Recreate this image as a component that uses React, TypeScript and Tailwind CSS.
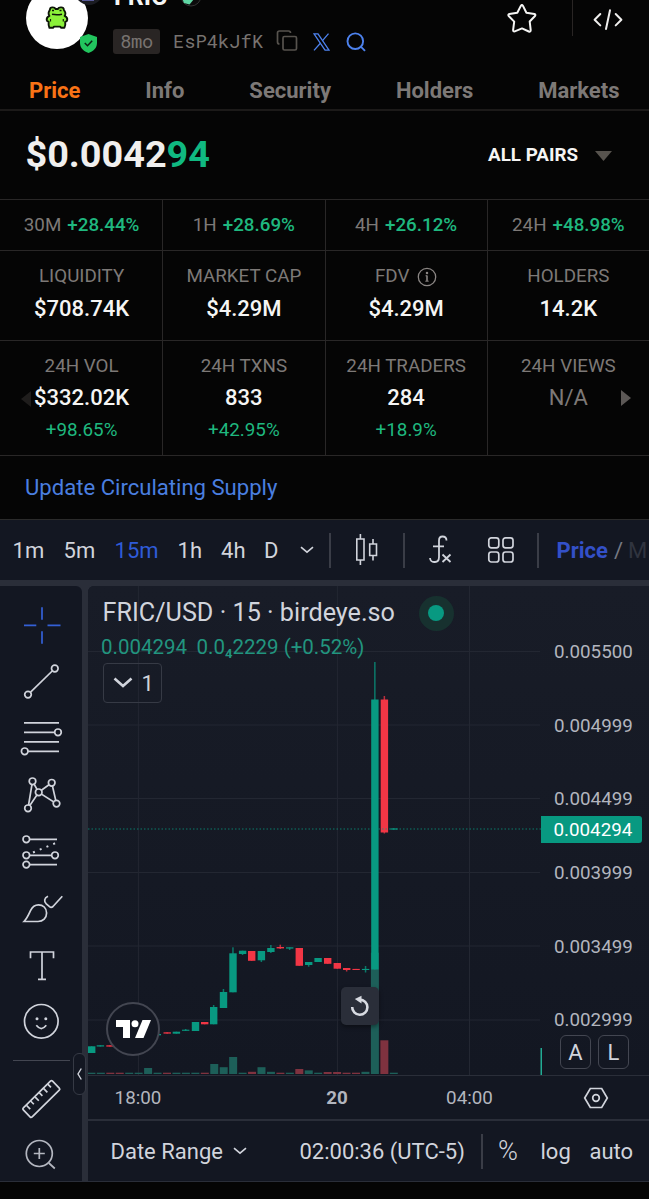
import React from "react";

type Kids = { children?: React.ReactNode };

/* ---------- header ---------- */

function Frog() {
  return (
    <svg width="24" height="24" viewBox="0 0 24 24" className="block">
      <path
        d="M5 3.2C5 1 9.5.6 10.6 3h2.2C14 .6 18.600 1 18.800 3.400c.2 1.600 1.600 2 1.600 4.200 0 1.200-.4 1.800-.8 2.200 1.800.8 3 2.200 2.600 4.200-.2 1.200-1.200 1.600-2 1.800.4 2.600 0 4.600-.8 6H16l-.8-1.200H9L8 21.800H4.400c-.8-1.600-1-3.600-.8-6-1-.2-1.800-.8-1.900-1.800-.2-2 .9-3.400 2.700-4.200C3.800 9 3.500 8.200 3.600 7c.1-1.700 1.200-2.200 1.400-3.800z"
        fill="#8bf03a"
        stroke="#0d1508"
        strokeWidth="1.900"
        strokeLinejoin="round"
      />
      <path d="M7 4.500h2M14.500 4.500h2" stroke="#0d1508" strokeWidth="1.700" />
      <path d="M7 8.300q5 1 10-.1" stroke="#0d1508" strokeWidth="1.600" fill="none" />
      <path d="M5.500 13v2.500M18.300 13v2.500" stroke="#12210a" strokeWidth="1.200" />
    </svg>
  );
}

function Header() {
  return (
    <div className="relative flex h-[72px] overflow-hidden">
      <div className="-mt-[13px] ml-[26px] flex h-[61.500px] w-[61.500px] shrink-0 items-center justify-center rounded-full bg-white">
        <Frog />
      </div>
      <svg className="absolute left-[80px] top-[34px]" width="17" height="19" viewBox="0 0 17 19">
        <path d="M8.500 0 17 3v6c0 5-3.800 8.300-8.500 10C3.800 17.300 0 14 0 9V3z" fill="#22c55e" />
        <path d="m4.800 9 2.700 2.700 4.700-4.900" stroke="#0c1f14" strokeWidth="1.500" fill="none" />
      </svg>
      <svg className="absolute left-[78px] top-0" width="22" height="6" viewBox="0 0 22 6">
        <path d="M0 0h22q-5 5-11 5T0 0" fill="#1b1c22" />
        <path d="M4 0h12v1H4z" fill="#5a5c9c" />
      </svg>
      <div className="ml-[25.500px] flex flex-col">
        <div className="-mt-[18px] flex h-[30px] items-center">
          <span className="w-[67px] pl-[1px] text-[25px] font-bold leading-[30px] text-[#f5f5f4]">FRIC</span>
          <svg width="22" height="22" viewBox="0 0 22 22" className="-mt-[3px]">
            <circle cx="11" cy="11" r="10" fill="#0b0b0b" stroke="#333" />
            <path d="M1.500 12 4 6h13l-3 8-4.500 5.500L4 18z" fill="#5fd6a4" />
          </svg>
        </div>
        <div className="mt-[16px] flex h-[26px] items-center font-['Roboto_Mono','DejaVu_Sans_Mono',monospace] text-[18.800px] text-[#787370]">
          <span className="flex h-[25px] w-[47px] items-center justify-center rounded-[3px] bg-[#292524] tracking-[-0.200px]">
            8mo
          </span>
          <span className="ml-[13px] w-[92px]">EsP4kJfK</span>
          <svg width="22" height="22" viewBox="0 0 22 22" className="-mt-[2px] ml-[11px]" fill="none" stroke="#57534e" strokeWidth="1.700">
            <rect x="7" y="7.500" width="13.500" height="13.500" rx="1.500" />
            <path d="M3.500 15Q1.500 15 1.500 13V4Q1.500 2 3.500 2H12.500Q14.500 2 14.500 4" />
          </svg>
          <svg width="17" height="18" viewBox="0 0 17 18" className="ml-[15px] mt-[1px]" fill="none" stroke="#4d82ee">
            <path d="M1 .8h4L16 17.200h-4z" strokeWidth="1.300" />
            <path d="M15.500.6 9.300 7.800M7.600 10 1 17.400" strokeWidth="1.300" />
          </svg>
          <svg width="20" height="20" viewBox="0 0 20 20" className="ml-[16px] mt-[1px]" fill="none" stroke="#4d82ee" strokeWidth="1.900">
            <circle cx="9.300" cy="9.200" r="7.800" />
            <path d="m14.800 14.700 4.200 4.200" />
          </svg>
        </div>
      </div>
      <svg width="30" height="30" viewBox="0 0 30 30" className="ml-[141px] mt-[4px]" fill="none" stroke="#f5f5f4" strokeWidth="2" strokeLinejoin="round">
        <path d="M13.800 1.900q1.100-1.900 2.200 0l3.400 6.800 8 1.300q1.600.6.600 2l-5.300 5.500 1 8.600q-.1 2-1.900 1.400L15 24.400l-7.200 3q-1.700.4-1.700-1.300l1.100-8.500-5.500-5.600q-1-1.500.7-2l7.900-1.200z" />
      </svg>
      <div className="ml-[35px] h-[36px] w-px bg-[#292524]" />
      <svg width="30" height="22" viewBox="0 0 30 22" className="ml-[20px] mt-[9px]" fill="none" stroke="#f0efee" strokeWidth="2" strokeLinecap="round" strokeLinejoin="round">
        <path d="M7.300 5 1.600 10.700l5.700 5.700M22.700 5l5.700 5.700-5.700 5.700M17 1.200l-4 18.800" />
      </svg>
    </div>
  );
}

function Tabs() {
  return (
    <nav className="flex h-[39px] items-center justify-between border-b-2 border-[#1c1a19] pl-[29px] pr-[29.500px] text-[22px] font-bold text-[#7d7977]">
      <span className="text-[#f97316]">Price</span>
      <span>Info</span>
      <span>Security</span>
      <span>Holders</span>
      <span>Markets</span>
    </nav>
  );
}

/* ---------- price stats ---------- */

const changes = [
  ["30M", "+28.44%"],
  ["1H", "+28.69%"],
  ["4H", "+26.12%"],
  ["24H", "+48.98%"],
];

const totals = [
  ["LIQUIDITY", "$708.74K"],
  ["MARKET CAP", "$4.29M"],
  ["FDV", "$4.29M"],
  ["HOLDERS", "14.2K"],
];

const daily = [
  ["24H VOL", "$332.02K", "+98.65%"],
  ["24H TXNS", "833", "+42.95%"],
  ["24H TRADERS", "284", "+18.9%"],
  ["24H VIEWS", "N/A", ""],
];

function InfoIcon() {
  return (
    <svg width="20" height="20" viewBox="0 0 20 20" fill="none" stroke="#8a8583" strokeWidth="1.300">
      <circle cx="10" cy="10" r="8.700" />
      <path d="M10 8.500v5.500" strokeWidth="1.600" />
      <path d="M8.500 8.800h1.500M8.300 14.200h3.400" strokeWidth="1" />
      <circle cx="10" cy="6" r=".6" fill="#8a8583" />
    </svg>
  );
}

function Stats() {
  return (
    <div className="text-center text-[18.800px] text-[#7d7977]">
      <div className="grid h-[52px] grid-cols-4 border-y border-[#292727]">
        {changes.map(([k, v]) => (
          <div key={k} className="flex items-center justify-center gap-[6px] border-l border-[#292727] first:border-transparent">
            <span>{k}</span>
            <span className="font-medium text-[#1fb87f]">{v}</span>
          </div>
        ))}
      </div>
      <div className="grid h-[90px] grid-cols-4 border-b border-[#292727]">
        {totals.map(([k, v]) => (
          <div key={k} className="border-l border-[#292727] pt-[9.500px] first:border-transparent">
            <div className="flex h-8 items-center justify-center gap-[8px]">
              {k}
              {k === "FDV" && <InfoIcon />}
            </div>
            <div className="text-[22px] font-medium leading-8 text-[#f5f5f4]">{v}</div>
          </div>
        ))}
      </div>
      <div className="relative">
        <div className="grid h-[115px] grid-cols-4 border-b border-[#292727]">
          {daily.map(([k, v, p]) => (
            <div key={k} className="border-l border-[#292727] pt-[9px] first:border-transparent">
              <div className="leading-8">{k}</div>
              <div className={v === "N/A" ? "text-[22px] leading-8" : "text-[22px] font-medium leading-8 text-[#f5f5f4]"}>{v}</div>
              <div className="leading-8 text-[#1fb87f]">{p}</div>
            </div>
          ))}
        </div>
        <svg className="absolute left-[21px] top-[50px]" width="10" height="16" viewBox="0 0 10 16">
          <path d="M10 0v16L0 8z" fill="#1f1d1c" />
        </svg>
        <svg className="absolute left-[621px] top-[49px]" width="10" height="16" viewBox="0 0 10 16">
          <path d="M0 0v16l10-8z" fill="#5c5856" />
        </svg>
      </div>
    </div>
  );
}

/* ---------- chart toolbar ---------- */

function Sep() {
  return <div className="h-[35px] w-[2px] shrink-0 bg-[#3a3d47]" />;
}

function Chevron({ className }: { className: string }) {
  return (
    <svg width="14" height="8" viewBox="0 0 14 8" className={className} fill="none" stroke="#d1d4dc" strokeWidth="1.600">
      <path d="m1 1.200 6 5 6-5" />
    </svg>
  );
}

function TopBar() {
  return (
    <div className="flex h-[61px] items-center overflow-hidden whitespace-nowrap border-t border-[#2b2b2b] bg-[#131722] text-[22px] text-[#d1d4dc]">
      <span className="ml-[12.600px] w-[51px]">1m</span>
      <span className="w-[51px]">5m</span>
      <span className="w-[63px] text-[#2f5bd8]">15m</span>
      <span className="w-[43.500px]">1h</span>
      <span className="w-[43px]">4h</span>
      <span className="w-[36px]">D</span>
      <Chevron className="mr-[14.900px] shrink-0" />
      <Sep />
      <svg width="24" height="34" viewBox="0 0 24 34" className="-mt-[1px] ml-[24px] shrink-0" fill="none" stroke="#d1d4dc" strokeWidth="1.600">
        <path d="M5.400 1v5M5.400 27v5M1.800 6h7.200v21H1.800zM18 6v5M18 22.500v5M14.700 11h6.800v11.500h-6.800z" />
      </svg>
      <div className="ml-[24px] flex">
        <Sep />
      </div>
      <svg width="24" height="30" viewBox="0 0 24 30" className="ml-[24px] shrink-0" fill="none" stroke="#d1d4dc" strokeWidth="1.800">
        <path d="M17.500 5.500q0-4-4-4-3.500 0-3.500 4V22q0 5-4 5H5q-3.500 0-4-4M4 11.300h11M13.500 19.500l8 7.500M21.500 19.500l-8 7.500" />
      </svg>
      <svg width="28" height="28" viewBox="0 0 28 28" className="ml-[34px] shrink-0" fill="none" stroke="#d1d4dc" strokeWidth="1.700">
        <rect x="1.800" y="1.800" width="10" height="10" rx="2.500" />
        <rect x="16" y="1.800" width="10" height="10" rx="2.500" />
        <rect x="1.800" y="16" width="10" height="10" rx="2.500" />
        <rect x="16" y="16" width="10" height="10" rx="2.500" />
      </svg>
      <div className="ml-[22px] flex">
        <Sep />
      </div>
      <span className="ml-[17.500px] font-bold text-[#3350c8]">Price</span>
      <span className="ml-[6px] text-[#767983]">/</span>
      <span className="ml-[5px] text-[#30343f]">M</span>
    </div>
  );
}

/* ---------- drawing tools ---------- */

function Tool({ children }: Kids) {
  return (
    <svg width="56" height="56.600" viewBox="-29 -28.300 56 56.600" className="shrink-0" fill="none" stroke="#d1d4dc" strokeWidth="1.700">
      {children}
    </svg>
  );
}

function Rings({ at }: { at: [number, number][] }) {
  return (
    <>
      {at.map(([x, y]) => (
        <circle key={`${x},${y}`} cx={x} cy={y} r="3.300" fill="#131722" />
      ))}
    </>
  );
}

function Tools() {
  return (
    <div className="relative flex w-[82px] flex-col items-center rounded-tr-[6px] bg-[#131722] pt-[11px]">
      <Tool>
        <path stroke="#3460d6" d="M-18 0h12.300M5.500 0h13M0-18v12.500M0 6v12.500" />
      </Tool>
      <Tool>
        <path d="M-14 12.300 12.800-13.800" />
        <Rings at={[[-14, 12.300], [12.800, -13.800]]} />
      </Tool>
      <Tool>
        <path d="M-18-15.500h35M-18-6h35M-18 3.500h35M-18 13h35" />
        <Rings at={[[16, -6], [-17.300, 13]]} />
      </Tool>
      <Tool>
        <path d="M-14 13-9.500-14-3.300-3 9.700-12.500l4.800 20.800L-3.300-3z" />
        <Rings at={[[-9.500, -14], [-14, 13], [-3.300, -3], [9.700, -12.500], [14.500, 8.300]]} />
      </Tool>
      <Tool>
        <path d="M-15.700-12H15M-15.700 4H13M-15.700 13.300H15" />
        <path d="m-9 1.200 23-9.600" strokeDasharray="2 5.300" strokeWidth="2" />
        <Rings at={[[-15.700, -12], [-15.700, 4], [13, 4], [-15.700, 13.300]]} />
      </Tool>
      <Tool>
        <path d="M-18 13.200H-4C1 13.200 4.600 9.600 4.600 4.800 4.600-.4 1-3.500-3.500-3.500c-4 0-6.200 2-8 5.800C-13.600 7-15 10-18 13.200z" />
        <path d="M6-12C2-10.200 1.800-7 4.300-4.400L7.500-1.600q1.700 1.400 3.500-.2L20.300-12" />
      </Tool>
      <Tool>
        <path d="M-11.500-7v-6.300h23V-7M0-13.300V14M-4 14h8" />
      </Tool>
      <Tool>
        <circle cx="-.7" cy="0" r="16.800" />
        <circle cx="-5" cy="-2.500" r="1.500" fill="#d1d4dc" stroke="none" />
        <circle cx="3.800" cy="-2.500" r="1.500" fill="#d1d4dc" stroke="none" />
        <path d="M-5.700 4Q-.7 10.500 4.300 4" />
      </Tool>
      <div className="mt-[10px] h-px w-[57px] shrink-0 bg-[#434651]" />
      <svg width="56" height="56" viewBox="-28.300 -28 56 56" className="mt-[10px] shrink-0" fill="none" stroke="#d1d4dc" strokeWidth="1.700">
        <g transform="rotate(-44.500)">
          <rect x="-20.500" y="-6.300" width="41" height="12.600" rx="1.500" />
          <path d="M-15-6V-.500M-9-6V-1.500M-3-6V-.500M3-6V-1.500M9-6V-.500M15-6V-1.500" />
        </g>
      </svg>
      <svg width="56" height="56" viewBox="-28.300 -28 56 56" className="shrink-0" fill="none" stroke="#b4b7c0" strokeWidth="1.700">
        <circle cx="-2" cy="-1.500" r="13" />
        <path d="M-7.500-1.500H3.500M-2-7V4M7.500 8l6 5.500" />
      </svg>
      <div className="absolute left-[73px] top-[467px] z-10 flex h-[42px] w-[13px] items-center justify-center rounded-[6px] border border-[#363a45] bg-[#131722]">
        <svg width="5" height="12" viewBox="0 0 5 12" fill="none" stroke="#d1d4dc" strokeWidth="1.400">
          <path d="M4.300.5 1 6l3.300 5.500" />
        </svg>
      </div>
    </div>
  );
}

/* ---------- candles ---------- */

const UP = "#089981";
const DOWN = "#f23645";

// x, direction, body top, body bottom, wick top, wick bottom
const candles: [number, number, number, number, number, number][] = [
  [88, 1, 1046.3, 1053, 1046.3, 1053],
  [96.7, 1, 1045.3, 1046.5, 1045.3, 1046.5],
  [106.3, 0, 1045.3, 1046.6, 1045.3, 1046.6],
  [153.6, 1, 1034, 1035.3, 1033, 1036],
  [163.5, 0, 1032.3, 1033.6, 1032.3, 1033.6],
  [172.7, 1, 1031.7, 1033.7, 1031.7, 1033.7],
  [182, 1, 1029.7, 1030.8, 1029, 1030.8],
  [191.8, 1, 1022, 1031, 1022, 1031],
  [201, 0, 1022, 1024.3, 1022, 1024.3],
  [210, 1, 1007, 1024.3, 1005, 1024.3],
  [219.8, 1, 992, 1008, 989, 1008],
  [229.3, 1, 953.3, 992.3, 947.3, 992.3],
  [238.9, 1, 950.7, 954, 950.7, 955],
  [248, 0, 951, 960.8, 951, 960.8],
  [257.7, 1, 951, 960.3, 951, 962],
  [267.2, 1, 948, 952, 945, 953],
  [276.6, 0, 947, 948.4, 944.7, 949],
  [286, 1, 947.3, 948.6, 947.3, 950],
  [295.6, 0, 948, 965.8, 948, 965.8],
  [305, 1, 962, 965, 962, 966.7],
  [314.4, 1, 958, 962, 958, 962],
  [324, 0, 958, 963.8, 958, 963.8],
  [333.6, 0, 963, 968.7, 963, 968.7],
  [343, 0, 968, 970, 968, 971.5],
  [352.4, 0, 968.9, 970, 968.9, 970],
  [361.9, 1, 968.9, 970, 966, 972.5],
  [371.2, 1, 699.5, 969.5, 662, 969.5],
  [380.7, 0, 699.5, 832.5, 696, 833.5],
  [390.3, 1, 828.4, 829.6, 828.4, 829.6],
];

// direction and height, left to right
const volumes: [number, number][] = [
  [1, 1.3], [1, 1.3], [0, 1.3], [0, 1.3], [1, 1.3], [1, 1.3], [1, 6], [1, 1.3], [0, 1.3], [1, 1.3],
  [1, 1.3], [1, 1.3], [0, 1.3], [1, 10], [1, 6.8], [1, 17], [1, 1.3], [0, 2.2], [1, 6.8], [1, 2.2],
  [0, 1.3], [1, 1.3], [0, 5], [1, 3.6], [1, 1.3], [0, 2], [0, 2], [0, 1.3], [0, 1.3], [1, 2.2],
  [1, 121.3], [0, 33.7], [1, 1.3],
];

function Plot() {
  return (
    <svg width="454" height="489" viewBox="88 586 454 489" className="block shrink-0">
      <g stroke="#232732" strokeWidth="1">
        {[651.5, 725, 798.5, 872.5, 946, 1020].map((y) => (
          <line key={y} x1="88" x2="540" y1={y} y2={y} />
        ))}
        {[138.4, 337.4, 469.5].map((x) => (
          <line key={x} x1={x} x2={x} y1="586" y2="1075" />
        ))}
      </g>
      {volumes.map(([up, h], i) => {
        const x = 87.4 + i * 9.45;
        return <rect key={i} x={x} y={1074 - h} width="8" height={h} fill={up ? "#1d5f59" : "#7f323f"} />;
      })}
      {candles.map(([x, up, top, bottom, hi, lo]) => {
        const fill = up ? UP : DOWN;
        return (
          <g key={x} fill={fill}>
            <rect x={x + 2.9} y={hi} width="1.500" height={lo - hi} opacity=".75" />
            <rect x={x} y={top} width="7.400" height={bottom - top} />
          </g>
        );
      })}
      <line x1="88" x2="542" y1="829" y2="829" stroke="#089981" strokeWidth="1.200" strokeDasharray="1.500 2" opacity=".75" />
      <rect x="540.500" y="1048" width="1.500" height="27" fill="#22ab94" />
    </svg>
  );
}

const prices = ["0.005500", "0.004999", "0.004499", "0.003999", "0.003499", "0.002999"];

function Legend() {
  return (
    <div className="absolute left-[13px] top-[9px] whitespace-nowrap">
      <div className="flex h-[36px] items-center text-[25.200px] text-[#d1d4dc]">
        <span className="w-[317.500px] pl-[1.500px]">FRIC/USD · 15 · birdeye.so</span>
        <span className="flex h-[35px] w-[35px] items-center justify-center rounded-full bg-[#17312f]">
          <span className="h-[15.500px] w-[15.500px] rounded-full bg-[#089981]" />
        </span>
      </div>
      <div className="flex h-[32px] items-center text-[20.500px] text-[#22957f]">
        <span>0.004294</span>
        <span className="ml-[9.500px]">0.0</span>
        <span className="mt-[13px] text-[13px] font-bold">4</span>
        <span>2229 (+0.52%)</span>
      </div>
      <div className="ml-[2px] flex h-[40px] w-[59px] items-center rounded-[4px] border-[1.500px] border-[#363a45] text-[22px] text-[#d1d4dc]">
        <svg width="20" height="12" viewBox="0 0 20 12" className="ml-[9px]" fill="none" stroke="#d1d4dc" strokeWidth="2.600">
          <path d="m1.500 1.500 8.500 7.500 8.500-7.500" />
        </svg>
        <span className="ml-[8.500px]">1</span>
      </div>
    </div>
  );
}

function Chart() {
  return (
    <div className="flex min-w-0 flex-1 flex-col overflow-hidden rounded-tl-[6px] bg-[#131722]">
      <div className="relative flex h-[490px] border-b border-[#2a2e39] bg-linear-to-b from-[#181c27] to-[#131722]">
        <Plot />
        <div className="flex flex-col pl-[12px] pt-[30px] text-[18.800px] text-[#b2b5be]">
          {prices.map((p) => (
            <span key={p} className="h-[73.700px] leading-[73.700px]">{p}</span>
          ))}
        </div>
        <Legend />
        <div className="absolute left-[453px] top-[230px] flex h-[27px] w-[101px] items-center rounded-r-[3px] bg-[#089981] pl-[12.500px] pt-[2px] text-[18.800px] text-white">
          0.004294
        </div>
        <div className="absolute left-[472px] top-[449px] flex gap-[7px] text-[22px] leading-none text-[#d1d4dc]">
          <span className="flex h-[34px] w-[31px] items-center justify-center rounded-[6px] border border-[#434651] pt-[1px]">A</span>
          <span className="flex h-[34px] w-[31px] items-center justify-center rounded-[6px] border border-[#434651] pt-[1px]">L</span>
        </div>
        <div className="absolute left-[18px] top-[416px] flex h-[54px] w-[54px] items-center justify-center rounded-full border-2 border-[#434651] bg-[#131722]">
          <svg width="35" height="18" viewBox="0 0 35 18" fill="#fff">
            <path d="M0 0h14v18H7V7H0z" />
            <circle cx="19" cy="3.800" r="3.500" />
            <path d="M26.500 0H35l-7.500 18H19z" />
          </svg>
        </div>
        <div className="absolute left-[253px] top-[401px] flex h-[38px] w-[38px] items-center justify-center rounded-[5px] bg-[#2a2e39] shadow-[0_2px_4px_rgba(0,0,0,0.4)]">
          <svg width="20" height="22" viewBox="0 0 20 22" fill="none" stroke="#d8dbe2" strokeWidth="2.600">
            <path d="M2.200 12A7.600 7.600 0 1 0 9.800 4.600H8.500" />
            <path d="M11.500.8v7.800L4.800 4z" fill="#d8dbe2" stroke="none" />
          </svg>
        </div>
      </div>
      <div className="flex h-[45px] items-center border-b-2 border-[#2a2e39] pt-[2px] text-[18.800px] text-[#b2b5be]">
        <span className="w-[100px] text-center">18:00</span>
        <span className="ml-[99px] w-[100px] text-center font-bold">20</span>
        <span className="ml-[32.500px] w-[100px] text-center">04:00</span>
        <svg width="26" height="22" viewBox="0 0 26 22" className="-mt-[2px] ml-[63px]" fill="none" stroke="#d1d4dc" strokeWidth="1.700">
          <path d="M1.700 11 7.300 1.500h11.400L24.300 11l-5.600 9.500H7.300z" />
          <circle cx="13" cy="11" r="3.300" />
        </svg>
      </div>
      <div className="flex h-[60px] items-center whitespace-nowrap text-[22px] text-[#d1d4dc]">
        <span className="ml-[22.500px] w-[122px]">Date Range</span>
        <Chevron className="shrink-0" />
        <span className="ml-[53px] w-[181.500px]">02:00:36 (UTC-5)</span>
        <Sep />
        <span className="ml-[15px] w-[42.500px] text-[27px] font-light">%</span>
        <span className="w-[49px]">log</span>
        <span>auto</span>
      </div>
    </div>
  );
}

export default function App() {
  return (
    <div className="h-[1199px] w-[649px] overflow-hidden bg-[#050505] font-['Roboto',sans-serif] antialiased">
      <Header />
      <Tabs />
      <div className="flex h-[88px] items-center justify-between pl-[25.500px] pr-[37px]">
        <div className="-mt-[2px] text-[37.800px] font-bold text-[#f0efee]">
          $0.0042<span className="text-[#10b981]">94</span>
        </div>
        <div className="flex items-center gap-[17px] text-[18.800px] font-bold text-[#f5f5f4]">
          ALL PAIRS
          <svg width="17" height="10" viewBox="0 0 17 10" className="mt-[2px]">
            <path d="M0 0h17L8.500 10z" fill="#57534e" />
          </svg>
        </div>
      </div>
      <Stats />
      <div className="flex h-[63px] items-center pl-[25px] text-[22.100px] text-[#4a7fe0]">Update Circulating Supply</div>
      <TopBar />
      <div className="flex h-[602px] gap-[6px] border-b border-t-[6px] border-[#2a2e39] bg-[#2a2e39]">
        <Tools />
        <Chart />
      </div>
    </div>
  );
}
